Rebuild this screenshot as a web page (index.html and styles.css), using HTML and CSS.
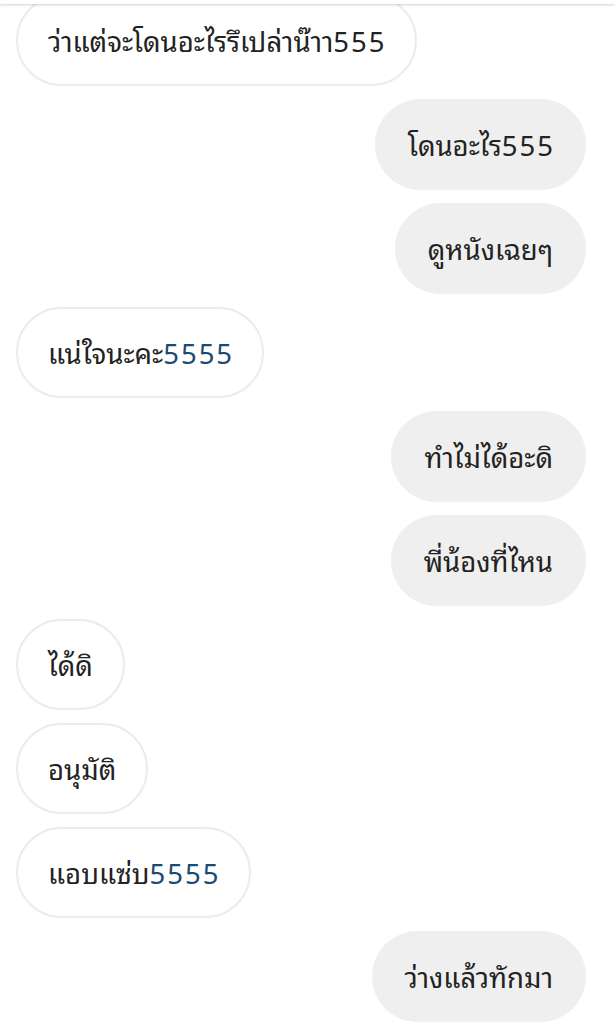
FILE: index.html
```html
<!DOCTYPE html>
<html lang="th">
<head>
    <meta charset="UTF-8">
    <meta name="viewport" content="width=device-width, initial-scale=1.0">
    <title>แชท</title>
    <link rel="stylesheet" href="styles.css">
</head>
<body>
    <div class="topbar"></div>
    <main class="chat">
        <div class="msg in">ว่าแต่จะโดนอะไรรึเปล่าน๊าา<span class="num">555</span></div>
        <div class="msg out">โดนอะไร<span class="num">555</span></div>
        <div class="msg out">ดูหนังเฉยๆ</div>
        <div class="msg in">แน่ใจนะคะ<span class="num link">5555</span></div>
        <div class="msg out">ทำไม่ได้อะดิ</div>
        <div class="msg out">พี่น้องที่ไหน</div>
        <div class="msg in">ได้ดิ</div>
        <div class="msg in">อนุมัติ</div>
        <div class="msg in">แอบแซ่บ<span class="num link">5555</span></div>
        <div class="msg out">ว่างแล้วทักมา</div>
    </main>
</body>
</html>
```

FILE: styles.css
```css
body {
    margin: 0;
    padding: 0;
    background-color: #fff;
    font-family: "Noto Sans Thai Looped", "Noto Sans", sans-serif;
    color: #222;
    overflow: hidden;
}
.topbar {
    position: fixed;
    top: 0;
    left: 0;
    right: 0;
    height: 4px;
    background: #fff;
    box-shadow: 0 1px 3px rgba(0, 0, 0, 0.18);
    z-index: 2;
}
.chat {
    display: flex;
    flex-direction: column;
    gap: 13px;
    margin-top: -5px;
    padding: 0 29px 0 16px;
}
.msg {
    box-sizing: border-box;
    height: 91px;
    border-radius: 46px;
    font-size: 27.5px;
    line-height: 91px;
    white-space: nowrap;
}
.msg.in {
    align-self: flex-start;
    border: 2px solid #ececec;
    line-height: 87px;
    padding: 0 30px;
}
.msg.out {
    align-self: flex-end;
    background-color: #efefef;
    padding: 0 33px;
}
.num {
    letter-spacing: 2px;
}
.num:last-child {
    margin-right: -2px;
}
.link {
    color: #1b4a72;
}
```
